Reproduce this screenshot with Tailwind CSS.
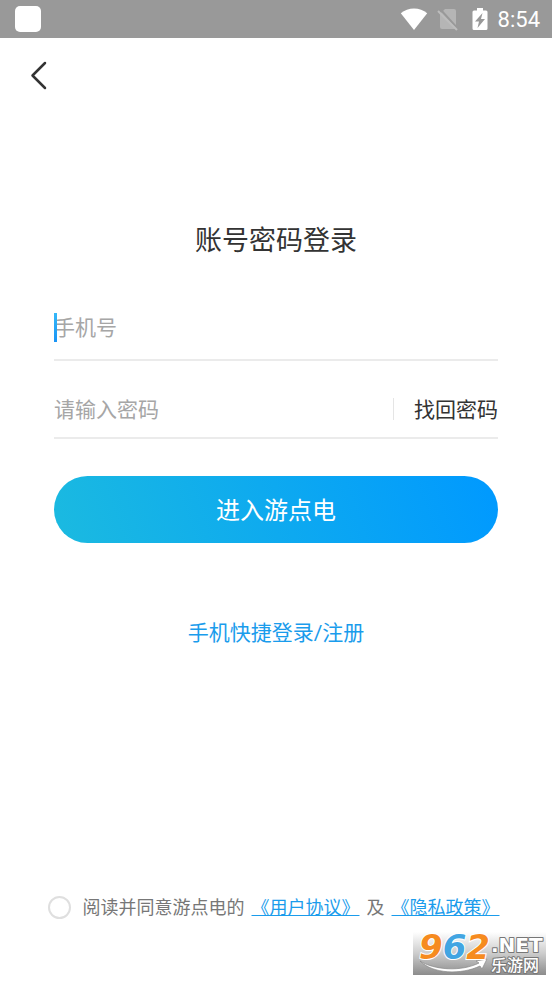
<!DOCTYPE html>
<html lang="zh-CN">
<head>
<meta charset="utf-8">
<meta name="viewport" content="width=device-width, initial-scale=1">
<title>账号密码登录</title>
<script src="https://cdn.jsdelivr.net/npm/@tailwindcss/browser@4"></script>
</head>
<body class="relative flex min-h-screen flex-col bg-white font-['Roboto','Noto_Sans_CJK_SC',sans-serif] text-[#333]">
  <!-- Status bar -->
  <header class="flex h-[38px] items-center justify-between bg-[#999] pr-3 pl-[15px] text-white">
    <span class="h-[26px] w-[26px] rounded-[5px] bg-white"></span>
    <div class="flex items-center">
      <svg class="h-6 w-7" viewBox="0 0 28 24" fill="currentColor" aria-hidden="true"><path d="M14 23 .8 6.200C4.500 3.300 9 1.500 14 1.500S23.500 3.300 27.200 6.200Z"/></svg>
      <svg class="ml-2 h-6 w-6" viewBox="0 0 24 24" aria-hidden="true"><path d="M9 2H18a2 2 0 0 1 2 2v16a2 2 0 0 1-2 2H6a2 2 0 0 1-2-2V7Z" fill="#b5b5b5"/><path d="M4 2 23 23" stroke="#999" stroke-width="2"/><path d="M2 4 21 23" stroke="#bdbdbd" stroke-width="2"/></svg>
      <svg class="ml-2 h-6 w-6" viewBox="0 0 24 24" aria-hidden="true"><path d="M9 1h6v2.500h3a1.500 1.500 0 0 1 1.500 1.500v16.500A1.500 1.500 0 0 1 18 23H6a1.500 1.500 0 0 1-1.500-1.500V5A1.500 1.500 0 0 1 6 3.500h3Z" fill="#fff"/><path d="M14.500 6 7 14.500H11L9.500 21l7.500-9H13Z" fill="#999"/></svg>
      <time class="ml-1.5 pt-0.5 text-[22px] leading-6">8:54</time>
    </div>
  </header>

  <nav class="flex h-[75px] items-center px-5">
    <button type="button" aria-label="返回" class="flex h-10 w-10 items-center justify-center">
      <svg class="h-8 w-8" viewBox="0 0 32 32" fill="none" stroke="#333" stroke-width="2.500" stroke-linecap="round" stroke-linejoin="round" aria-hidden="true"><path d="M21 3 8.500 15.500 21 28"/></svg>
    </button>
  </nav>

  <main class="flex flex-1 flex-col px-[54px]">
    <h1 class="mt-[108px] text-center text-[27px] leading-10">账号密码登录</h1>

    <form class="mt-[34px] flex flex-col">
      <div class="relative flex h-[66px] items-center border-b-2 border-[#ebebeb]">
        <input type="tel" aria-label="手机号" placeholder="手机号" class="h-8 w-full min-w-0 pt-0.5 text-[21px] outline-none placeholder:text-[#a6a6a6]">
        <span class="absolute left-0 h-[29px] w-[3px] bg-gradient-to-b from-[#35b8f8] to-[#1a94f5]"></span>
      </div>
      <div class="mt-5 flex h-[58px] items-center border-b-2 border-[#ebebeb]">
        <input type="password" aria-label="密码" placeholder="请输入密码" class="h-8 min-w-0 flex-1 pt-0.5 text-[21px] outline-none placeholder:text-[#a6a6a6]">
        <span class="h-[22px] w-px bg-[#e5e5e5]"></span>
        <a href="#" class="pt-0.5 pl-5 text-[21px] leading-8">找回密码</a>
      </div>
      <button type="button" class="mt-[37px] h-[67px] rounded-full bg-[linear-gradient(70deg,#1bbae0,#0099ff)] pt-0.5 text-[24px] text-white">进入游点电</button>
    </form>

    <a href="#" class="mt-[74px] self-center text-[21px] leading-8 text-[#1a9cec]">手机快捷登录/注册</a>
  </main>

  <footer class="flex items-center justify-center pr-[5px] pb-[59px] text-[18px] leading-7 text-[#777]">
    <input id="agree" type="checkbox" aria-label="同意协议" class="h-[23px] w-[23px] shrink-0 appearance-none rounded-full border-2 border-[#dfdfdf] bg-white">
    <div class="ml-3 flex gap-[7px] pt-0.5 whitespace-nowrap"><label for="agree">阅读并同意游点电的</label><a href="#" class="text-[#1a9cec] underline">《用户协议》</a><span>及</span><a href="#" class="text-[#1a9cec] underline">《隐私政策》</a></div>
  </footer>

  <!-- Site badge -->
  <svg class="absolute right-[6px] bottom-[6px] h-[43px] w-[133px] overflow-visible" viewBox="0 0 133 43" role="img" aria-label="962.NET 乐游网">
    <defs>
      <linearGradient id="badge" x2="0" y2="1"><stop stop-color="#fff"/><stop offset=".5" stop-color="#ccc"/><stop offset="1" stop-color="#8c8c8c"/></linearGradient>
    </defs>
    <path d="M0 0h133v43H0Z" fill="url(#badge)"/>
    <path d="M7 29c14 9 41 11 59 2l-3-2 11-2-5 10-2-3C48 43 20 42 7 29Z" fill="#fff" stroke="#888" stroke-width=".7"/>
    <g font-family="DejaVu Sans" font-weight="700" font-style="italic" font-size="34" stroke="#fff" stroke-width="2" paint-order="stroke">
      <text x="6" y="27" fill="#f68b1f">9<tspan fill="#42a5e2">6</tspan><tspan fill="#f68b1f">2</tspan></text>
    </g>
    <g fill="#fff" stroke="#777" stroke-width="2" stroke-linejoin="round" paint-order="stroke">
      <text x="78" y="20" font-family="DejaVu Sans" font-weight="700" font-size="20">.NET</text>
      <text x="78" y="39" font-family="Noto Sans CJK SC" font-weight="500" font-size="16">乐游网</text>
    </g>
  </svg>
</body>
</html>
